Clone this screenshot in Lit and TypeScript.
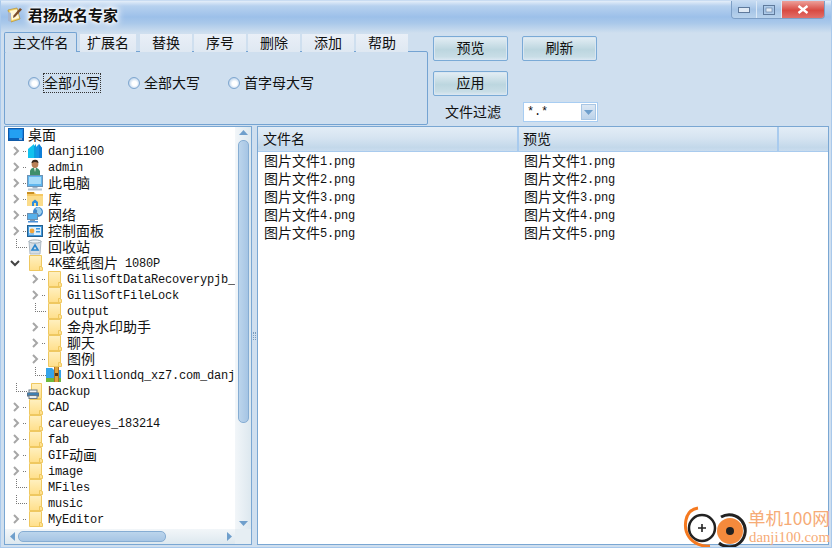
import { LitElement, html, css, svg } from "lit";
import { customElement } from "lit/decorators.js";

const t = (s: string) =>
  s.split(/([\x00-\x7f]+)/).filter(Boolean).map((p) =>
    /^[\x00-\x7f]+$/.test(p) ? html`<span class="l">${p}</span>` : html`<span class="c">${p}</span>`);

const folderBody = svg`<path d="M3.5 .5H15.5V12.5H16.5V15.5H3.5Z" fill="url(#fg)" stroke="#efc860"/><path d="M13.5 15V11.5H15.5" fill="none" stroke="#efc860"/>`;

const icons: Record<string, unknown> = {
  folder: folderBody,
  desktop: svg`<rect x=".5" y="1.5" width="15" height="12" fill="#1c86e6" stroke="#0e5aa8"/><rect x="2" y="3" width="12" height="8" fill="#23a0f2"/><rect x="1" y="11" width="14" height="2" fill="#0d62b8"/><rect x="11" y="11.5" width="3" height="1" fill="#cfe8fb"/>`,
  danji: svg`<path d="M2 6 8 1V15H2Z" fill="#12c2ee"/><path d="M8 3 10 1V15H8Z" fill="#0b9fe0"/><path d="M10 4 13 1 16 5V15H10Z" fill="#1796e6"/><path d="M13 1 16 5V15H13Z" fill="#0f7fd8"/>`,
  admin: svg`<path d="M4 16V11.5Q5 9 8 8.5H10Q13 9.5 14 12V16Z" fill="#3f8f6a"/><path d="M8 9 9 13 10 9Z" fill="#eef4ee"/><ellipse cx="9" cy="5" rx="3.4" ry="4" fill="#b98056"/><path d="M5.5 4Q6 .5 9.5 .8 12.5 1 12.4 4 9 2.5 7 3.5 6.5 4 5.5 4Z" fill="#3a2a1e"/>`,
  pc: svg`<rect x="1.5" y=".5" width="15" height="11" fill="#5fb6ee" stroke="#6e93b4"/><rect x="3" y="2" width="12" height="7" fill="#a8dcf9"/><rect x="6.5" y="12" width="5" height="1.5" fill="#9bb2c6"/><rect x="2" y="13.5" width="14" height="2" fill="#b9c6d2"/>`,
  lib: svg`<path d="M1 1H8L10 3H17V15H1Z" fill="#f6c964"/><rect x="1" y="1" width="7" height="2" fill="#c98f22"/><rect x="1" y="5" width="16" height="10" fill="#fbdc8a"/><path d="M6 15V11L9 8.5 12 11V15Z" fill="#2f8fdc"/><rect x="8" y="12" width="2" height="3" fill="#fbdc8a"/>`,
  net: svg`<circle cx="12" cy="5" r="5" fill="#3f87c9"/><path d="M9 2Q12 3 11 5T14 8L16 5Q15 1 12 0Z" fill="#9ed0ef"/><rect x="1.5" y="6.5" width="10" height="6" fill="#58b0ea" stroke="#6d8fb0"/><rect x="4" y="13" width="5" height="1" fill="#7d99b3"/><rect x="2" y="14" width="10" height="1.5" fill="#4a90d8"/>`,
  ctrl: svg`<rect x="1.5" y="2.5" width="15" height="11" fill="#3f97dc" stroke="#24608f"/><rect x="3" y="4" width="12" height="8" fill="#dff0fb"/><circle cx="6" cy="8" r="2.4" fill="#f2a53a"/><rect x="10" y="5" width="4" height="1.5" fill="#3f97dc"/><rect x="10" y="8" width="4" height="1.5" fill="#3f97dc"/><rect x="3" y="10.5" width="5" height="1" fill="#3f97dc"/>`,
  bin: svg`<path d="M3 2H15L14 15H4Z" fill="#d5dee5" stroke="#aebbc5"/><ellipse cx="9" cy="2.5" rx="6" ry="1.6" fill="#eef3f6" stroke="#a4b0ba"/><path d="M9 6 12 11H6Z" fill="none" stroke="#2c86cc" stroke-width="1.6"/>`,
  backup: svg`<path d="M5.5 .5H15.5V15.5H5.5Z" fill="url(#fg)" stroke="#efc860"/><rect x="3" y="7" width="8" height="3" fill="#f0f3f5" stroke="#6b7a86"/><rect x="1" y="9.5" width="12" height="4" fill="#56718a"/><rect x="3" y="12.5" width="8" height="3" fill="#e8eef2" stroke="#6b7a86"/><rect x="2" y="10.5" width="10" height="1" fill="#2b8fd8"/>`,
  rar: svg`<path d="M1 1H7L9 3H16V15H1Z" fill="#35a4ea"/><rect x="1" y="11" width="15" height="4" fill="#6fb93c"/><rect x="9" y="0" width="5" height="15" fill="#a9702a"/><rect x="10" y="0" width="3" height="15" fill="#e0a53a"/><rect x="10" y="6" width="3" height="3" fill="#5a3a12"/>`,
};

const icon = (n: string) => html`<svg class="ic" width="18" height="16" viewBox="0 0 18 16">
  <defs><linearGradient id="fg" x1="0" y1="0" x2="0" y2="1"><stop offset="0" stop-color="#fff0c0"/><stop offset="1" stop-color="#ffdf8a"/></linearGradient></defs>${icons[n]}</svg>`;

type Row = [string, string, "r" | "d" | "n" | "", number];
const rows: Row[] = [
  ["桌面", "desktop", "", 0],
  ["danji100", "danji", "r", 1],
  ["admin", "admin", "r", 1],
  ["此电脑", "pc", "r", 1],
  ["库", "lib", "r", 1],
  ["网络", "net", "r", 1],
  ["控制面板", "ctrl", "r", 1],
  ["回收站", "bin", "n", 1],
  ["4K壁纸图片 1080P", "folder", "d", 1],
  ["GilisoftDataRecoverypjb_", "folder", "r", 2],
  ["GiliSoftFileLock", "folder", "r", 2],
  ["output", "folder", "n", 2],
  ["金舟水印助手", "folder", "r", 2],
  ["聊天", "folder", "r", 2],
  ["图例", "folder", "r", 2],
  ["Doxilliondq_xz7.com_danj", "rar", "n", 2],
  ["backup", "backup", "n", 1],
  ["CAD", "folder", "r", 1],
  ["careueyes_183214", "folder", "r", 1],
  ["fab", "folder", "r", 1],
  ["GIF动画", "folder", "r", 1],
  ["image", "folder", "r", 1],
  ["MFiles", "folder", "n", 1],
  ["music", "folder", "n", 1],
  ["MyEditor", "folder", "r", 1],
];

const files = [1, 2, 3, 4, 5].map((n) => `图片文件${n}.png`);

@customElement("app-root")
export class AppRoot extends LitElement {
  static styles = css`
    :host { display: block; width: 832px; height: 548px; font: 14px/16px "Noto Sans CJK SC", sans-serif; color: #111; overflow: hidden; }
    .l { display: inline-block; font: 12px/14px "Liberation Mono", monospace; letter-spacing: -.2px; white-space: pre; vertical-align: 1px; }
    .c { display: inline-block; line-height: 16px; vertical-align: baseline; }
    .win { position: relative; box-sizing: border-box; width: 832px; height: 548px; display: flex; flex-direction: column; background: #cfdfef; border: 1px solid #a9c9ec; border-top-color: #c9dcf2; overflow: hidden; }
    .title { height: 32px; flex: none; display: flex; align-items: flex-start; background: linear-gradient(#e4eef9 0, #b7d1ef 5px, #9cc0e9 16px, #a9c8ea 22px, #cfdfef 32px); }
    .logo { margin: 6px 0 0 6px; flex: none; }
    .name { margin: 4px 0 0 4px; padding: 1px 4px 1px 1px; font-size: 15px; font-weight: 700; line-height: 18px; color: #111; text-shadow: 0 0 3px #fff, 0 0 5px #fff, 0 0 8px #fff, 0 0 10px #fff; flex: none; width: 95px; box-sizing: border-box; white-space: nowrap; }
    .caps { margin-left: auto; margin-right: 6px; display: flex; height: 17px; border: 1px solid #7d9fc6; border-top: 0; border-radius: 0 0 4px 4px; overflow: hidden; }
    .cap { width: 24px; display: flex; align-items: center; justify-content: center; background: linear-gradient(#c6dbf2, #a5c4e6 50%, #b8d2ec); border-right: 1px solid #dce9f6; }
    .cap.x { width: 42px; background: linear-gradient(#eda09a, #d84a42 55%, #e2706a); border-right: 0; color: #fff; }
    .top { height: 93px; flex: none; display: flex; padding-left: 3px; }
    .left { width: 424px; flex: none; display: flex; flex-direction: column; }
    .tabs { height: 19px; display: flex; align-items: flex-end; flex: none; position: relative; z-index: 1; margin-bottom: -1px; }
    .tab { height: 18px; width: 52px; margin-right: 2px; background: linear-gradient(#e9eff7, #dfe8f2); text-align: center; line-height: 17px; box-sizing: border-box; white-space: nowrap; }
    .tab.wide { width: 56px; margin-right: 4px; }
    .tab.on { width: 73px; height: 20px; margin-right: 3px; background: #d1e0ef; border: 1px solid #74a3d2; border-bottom: 0; border-radius: 2px 2px 0 0; line-height: 18px; }
    .panel { height: 74px; box-sizing: border-box; border: 1px solid #74a3d2; border-radius: 2px; display: grid; grid-template-columns: 100px 100px auto; padding: 21px 0 0 23px; align-content: start; }
    .radio { display: flex; align-items: center; gap: 3px; height: 20px; }
    .dot { width: 12px; height: 12px; box-sizing: border-box; flex: none; border-radius: 50%; border: 1px solid #7ea6cf; background: radial-gradient(circle at 55% 55%, #fff 30%, #cfe0f2 60%, #9dbcdc); }
    .radio span.lbl { padding: 0 0 2px; border: 1px dotted transparent; white-space: nowrap; line-height: 16px; }
    .radio span.f { border-color: #333; }
    .right { margin-left: 5px; display: grid; grid-template-columns: 75px 75px; column-gap: 14px; grid-template-rows: 25px 25px 20px; row-gap: 10px; padding-top: 3px; align-content: start; }
    .btn { border: 1px solid #7aaad6; border-radius: 2px; box-sizing: border-box; text-align: center; line-height: 20px; background: linear-gradient(#e4eef5, #bcd6df 55%, #c8dde6 85%, #dbe8f1); box-shadow: inset 0 0 0 1px #d9e6f1; }
    .lab { padding-left: 12px; line-height: 19px; margin-top: -4px; white-space: nowrap; height: 20px; }
    .combo { margin-left: 1px; width: 75px; margin-top: -4px; height: 20px; box-sizing: border-box; border: 1px solid #a8cdf2; background: #fff; display: flex; align-items: center; padding: 0 1px 0 3px; justify-content: space-between; }
    .combo .arrow { width: 15px; height: 16px; box-sizing: border-box; background: linear-gradient(#dce8f4, #bcd3ea); border: 1px solid #a8c6e4; display: flex; align-items: center; justify-content: center; }
    .main { flex: 1; display: flex; padding: 0 2px 2px 3px; min-height: 0; }
    .tree { width: 248px; flex: none; box-sizing: border-box; border: 1px solid #7aa7d3; background: #fff; display: grid; grid-template-columns: 1fr 16px; grid-template-rows: 1fr 15px; overflow: hidden; }
    .rows { overflow: hidden; min-width: 0; }
    .row { height: 16px; display: flex; align-items: flex-start; white-space: nowrap; overflow: hidden; }
    .row .ic { flex: none; }
    .tw { width: 21px; height: 16px; flex: none; position: relative; }
    .ind { width: 0; flex: none; }
    .lv0 .ind { width: 3px; }
    .lv2 .ind { width: 19px; }
    .lv0 .tw { width: 0; }
    .txt { margin-left: 4px; height: 16px; margin-top: -1px; }
    .lv0 .txt { margin-left: 2px; }
    .chev { position: absolute; left: 8px; top: 3px; }
    .chev.dn { left: 5px; top: 5px; }
    .dots { position: absolute; left: 18px; top: 8px; width: 3px; border-top: 1px dotted #777; }
    .elbow { position: absolute; left: 11px; top: 0; width: 10px; height: 8px; border-left: 1px dotted #777; border-bottom: 1px dotted #777; }
    .vbar { grid-column: 2; grid-row: 1; background: linear-gradient(90deg, #f2f6f9, #dde8ef); display: flex; flex-direction: column; align-items: center; padding-top: 3px; }
    .vthumb { width: 11px; height: 283px; margin-top: 5px; border: 1px solid #86add3; border-radius: 5px; box-sizing: border-box; background: linear-gradient(90deg, #bcd5ec, #a6c5e4); }
    .vbar .down { margin-top: auto; margin-bottom: 3px; }
    .hbar { grid-column: 1; grid-row: 2; background: linear-gradient(#f2f6f9, #dde8ef); display: flex; align-items: center; padding-left: 5px; padding-right: 1px; }
    .hthumb { width: 148px; height: 11px; margin-left: 3px; border: 1px solid #86add3; border-radius: 5px; box-sizing: border-box; background: linear-gradient(#bcd5ec, #a6c5e4); }
    .hbar .rgt { margin-left: auto; margin-right: 2px; }
    .corner { grid-column: 2; grid-row: 2; background: #e6eef3; }
    .split { width: 5px; flex: none; display: flex; align-items: center; justify-content: center; }
    .grip { width: 1px; height: 8px; border-left: 1px dotted #7a9cbd; border-right: 1px dotted #7a9cbd; }
    .list { flex: 1; box-sizing: border-box; border: 1px solid #7aa7d3; background: #fff; display: flex; flex-direction: column; min-width: 0; }
    .head { height: 24px; flex: none; display: grid; grid-template-columns: 261px 260px 1fr; background: linear-gradient(#e3edf6, #d6e4f1 45%, #c3d8ea 85%, #c9dcee); border-bottom: 1px solid #a9cbee; }
    .head div { padding-left: 5px; line-height: 22px; border-right: 2px solid #a9cbee; }
    .head div:nth-child(2) { padding-left: 4px; }
    .head div:last-child { border-right: 0; }
    .body { display: grid; grid-template-columns: 261px 1fr; grid-auto-rows: 18px; }
    .body div { padding-left: 6px; white-space: nowrap; height: 16px; }
    .body div:nth-child(even) { padding-left: 5px; }
    .wm { position: absolute; left: 679px; top: 493px; width: 152px; height: 53px; }
    .wm svg { position: absolute; left: 0; top: 0; overflow: visible; }
    .wm .a { position: absolute; left: 68px; top: 13px; font-size: 17.5px; line-height: 22px; white-space: nowrap; color: #f6ab76; }
    .wm .b { position: absolute; left: 69px; top: 34px; font: 14.8px/18px "Liberation Serif", serif; white-space: nowrap; color: #f6ab76; }
  `;

  render() {
    const chevR = html`<svg class="chev" width="7" height="10" viewBox="0 0 7 10"><path d="M1 1 5 5 1 9" fill="none" stroke="#a6a6a6" stroke-width="2"/></svg>`;
    const chevD = html`<svg class="chev dn" width="10" height="7" viewBox="0 0 10 7"><path d="M1 1 5 5 9 1" fill="none" stroke="#444" stroke-width="2"/></svg>`;
    const up = html`<svg width="9" height="5" viewBox="0 0 9 5"><path d="M0 5 4.5 0 9 5Z" fill="#6f9fcc"/></svg>`;
    const down = html`<svg class="down" width="9" height="5" viewBox="0 0 9 5"><path d="M0 0 4.5 5 9 0Z" fill="#6f9fcc"/></svg>`;
    return html`<div class="win">
      <div class="title">
        <svg class="logo" width="16" height="16" viewBox="0 0 16 16">
          <path d="M1 3 10 1 13 12 4 15Z" fill="#f5d66a" stroke="#b98f2e" stroke-width=".7"/>
          <path d="M3 4 10 2.5 12 11 5 13Z" fill="#fff7d8"/>
          <path d="M13 1 15 2.5 8 10 6 11 6.5 8.5Z" fill="#7a4b2a"/>
          <path d="M1 5V14L4 15V6Z" fill="#a7b6d0"/>
        </svg>
        <div class="name">君扬改名专家</div>
        <div class="caps">
          <div class="cap"><svg width="12" height="6" viewBox="0 0 12 6"><rect x=".5" y=".5" width="11" height="5" fill="#dfe9f4" stroke="#5f7a9c"/></svg></div>
          <div class="cap"><svg width="12" height="10" viewBox="0 0 12 10"><rect x=".5" y=".5" width="11" height="9" fill="none" stroke="#5f7a9c"/><rect x="3" y="3" width="6" height="4" fill="#dfe9f4" stroke="#5f7a9c" stroke-width=".6"/></svg></div>
          <div class="cap x"><svg width="12" height="9" viewBox="0 0 12 9"><path d="M1.5 1 10.5 8M10.5 1 1.5 8" stroke="#fff" stroke-width="2.4" fill="none"/></svg></div>
        </div>
      </div>
      <div class="top">
        <div class="left">
          <div class="tabs">
            <div class="tab on">主文件名</div>
            <div class="tab wide">扩展名</div>
            ${["替换", "序号", "删除", "添加", "帮助"].map((x) => html`<div class="tab">${x}</div>`)}
          </div>
          <div class="panel">
            <div class="radio"><i class="dot"></i><span class="lbl f">全部小写</span></div>
            <div class="radio"><i class="dot"></i><span class="lbl">全部大写</span></div>
            <div class="radio"><i class="dot"></i><span class="lbl">首字母大写</span></div>
          </div>
        </div>
        <div class="right">
          <div class="btn">预览</div><div class="btn">刷新</div>
          <div class="btn">应用</div><div></div>
          <div class="lab">文件过滤</div>
          <div class="combo"><span class="l">*.*</span><span class="arrow"><svg width="9" height="5" viewBox="0 0 9 5"><path d="M0 0 4.5 5 9 0Z" fill="#6f9fcc"/></svg></span></div>
        </div>
      </div>
      <div class="main">
        <div class="tree">
          <div class="rows">
            ${rows.map(([name, ic, tw, lv]) => html`<div class="row lv${lv}">
              <span class="ind"></span>
              <span class="tw">${tw === "r" ? html`${chevR}<i class="dots"></i>` : tw === "d" ? chevD : tw === "n" ? html`<i class="elbow"></i>` : ""}</span>
              ${icon(ic)}
              <span class="txt">${t(name)}</span>
            </div>`)}
          </div>
          <div class="vbar">${up}<div class="vthumb"></div>${down}</div>
          <div class="hbar">
            <svg width="5" height="9" viewBox="0 0 5 9"><path d="M5 0 0 4.5 5 9Z" fill="#6f9fcc"/></svg>
            <div class="hthumb"></div>
            <svg class="rgt" width="5" height="9" viewBox="0 0 5 9"><path d="M0 0 5 4.5 0 9Z" fill="#6f9fcc"/></svg>
          </div>
          <div class="corner"></div>
        </div>
        <div class="split"><i class="grip"></i></div>
        <div class="list">
          <div class="head"><div>文件名</div><div>预览</div><div></div></div>
          <div class="body">
            ${files.map((f) => html`<div>${t(f)}</div><div>${t(f)}</div>`)}
          </div>
        </div>
      </div>
      <div class="wm">
        <svg width="72" height="55" viewBox="0 0 72 55">
          <path d="M18 14C4 16 3 34 9 43 13 49 22 53 30 52" fill="none" stroke="#f5791f" stroke-width="3"/>
          <circle cx="22" cy="34" r="13" fill="#fff" stroke="#222" stroke-width="2.5"/>
          <path d="M18 34H26M22 30V38" stroke="#222" stroke-width="1.6"/>
          <circle cx="50" cy="37" r="13" fill="#f58a3c"/>
          <path d="M41 23A16 16 0 1 1 39 49" fill="none" stroke="#222" stroke-width="3"/>
          <circle cx="50" cy="37" r="4" fill="#222"/>
        </svg>
        <span class="a">单机100网</span>
        <span class="b">danji100.com</span>
      </div>
    </div>`;
  }
}
